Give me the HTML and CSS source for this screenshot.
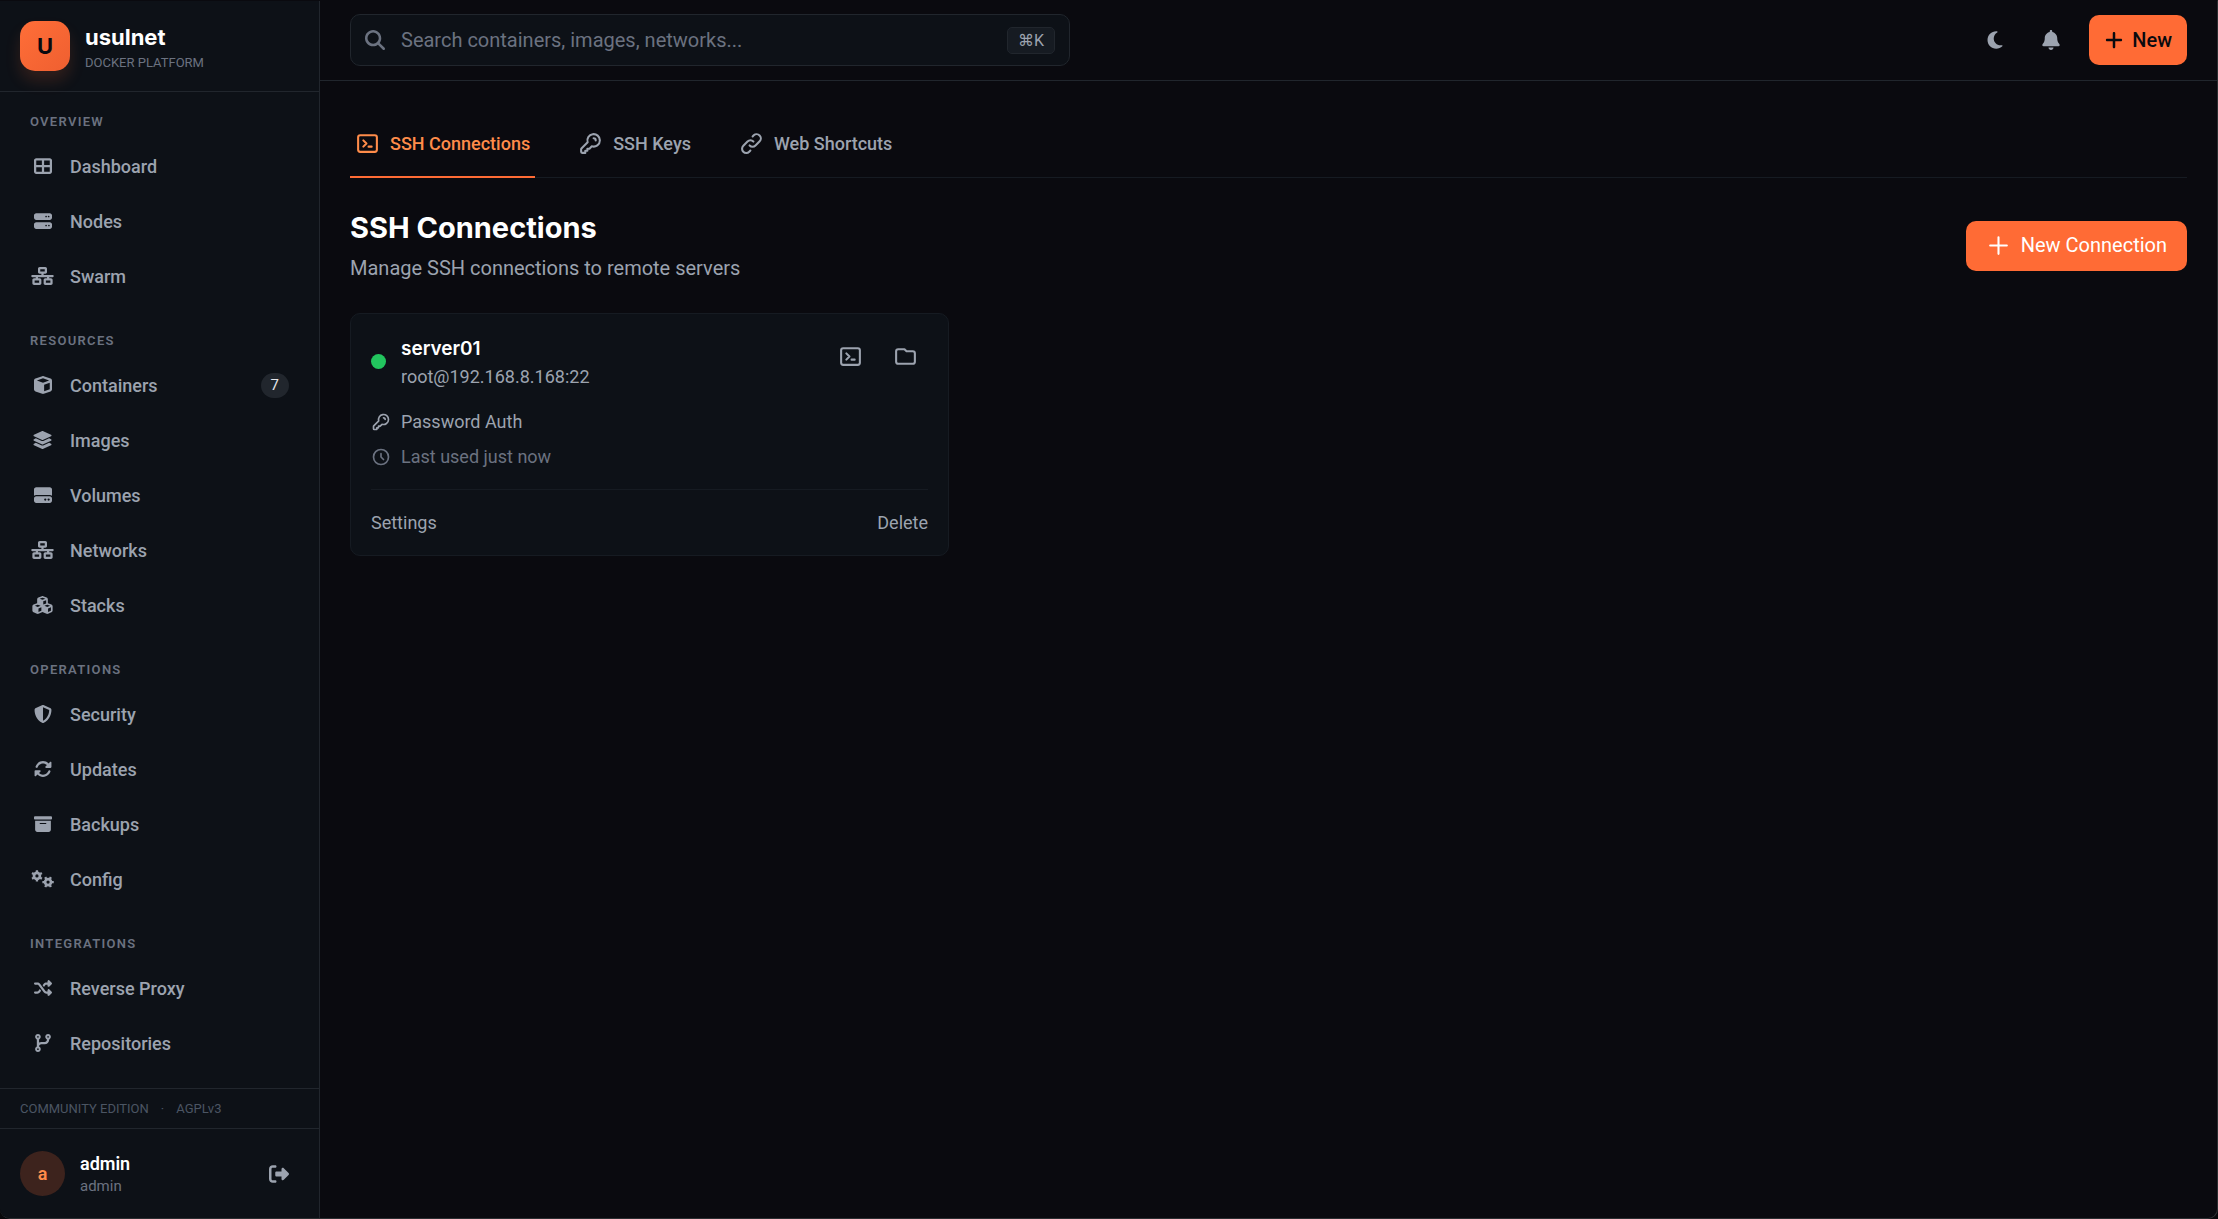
FILE: index.html
```
<!DOCTYPE html>
<html lang="en">
<head>
    <meta charset="UTF-8">
    <meta name="viewport" content="width=device-width, initial-scale=1.0">
    <title>SSH Connections - usulnet</title>
    <link rel="stylesheet" href="styles.css">
</head>
<body>
    <!-- Icon set -->
    <svg class="icon-set" aria-hidden="true">
        <symbol id="i-dashboard" viewBox="0 0 512 512"><path d="M448 96V224H288V96H448zm0 192V416H288V288H448zM224 224H64V96H224V224zM64 288H224V416H64V288zM64 32C28.7 32 0 60.7 0 96V416c0 35.3 28.7 64 64 64H448c35.3 0 64-28.7 64-64V96c0-35.3-28.7-64-64-64H64z"/></symbol>
        <symbol id="i-server" viewBox="0 0 512 512"><path d="M64 32C28.7 32 0 60.7 0 96v64c0 35.3 28.7 64 64 64H448c35.3 0 64-28.7 64-64V96c0-35.3-28.7-64-64-64H64zm280 72a24 24 0 1 1 0 48 24 24 0 1 1 0-48zm48 24a24 24 0 1 1 48 0 24 24 0 1 1 -48 0zM64 288c-35.3 0-64 28.7-64 64v64c0 35.3 28.7 64 64 64H448c35.3 0 64-28.7 64-64V352c0-35.3-28.7-64-64-64H64zm280 72a24 24 0 1 1 0 48 24 24 0 1 1 0-48zm56 24a24 24 0 1 1 48 0 24 24 0 1 1 -48 0z"/></symbol>
        <symbol id="i-network" viewBox="0 0 640 512"><path d="M256 64H384v64H256V64zM240 0c-26.5 0-48 21.5-48 48v96c0 26.5 21.5 48 48 48h48v32H32c-17.7 0-32 14.3-32 32s14.3 32 32 32h96v32H80c-26.5 0-48 21.5-48 48v96c0 26.5 21.5 48 48 48H240c26.5 0 48-21.5 48-48V368c0-26.5-21.5-48-48-48H192V288H448v32H400c-26.5 0-48 21.5-48 48v96c0 26.5 21.5 48 48 48H560c26.5 0 48-21.5 48-48V368c0-26.5-21.5-48-48-48H512V288h96c17.7 0 32-14.3 32-32s-14.3-32-32-32H352V192h48c26.5 0 48-21.5 48-48V48c0-26.5-21.5-48-48-48H240zM96 448V384H224v64H96zm320-64H544v64H416V384z"/></symbol>
        <symbol id="i-cube" viewBox="0 0 512 512"><path d="M234.5 5.7c13.9-5 29.1-5 43.1 0l192 68.6C495 83.4 512 107.5 512 134.6V377.4c0 27-17 51.2-42.5 60.3l-192 68.6c-13.9 5-29.1 5-43.1 0l-192-68.6C17 428.6 0 404.5 0 377.4V134.6c0-27 17-51.2 42.5-60.3l192-68.6zM256 66L82.3 128 256 190l173.7-62L256 66zm32 368.6l160-57.1v-188L288 246.6v188z"/></symbol>
        <symbol id="i-layers" viewBox="0 0 576 512"><path d="M264.5 5.2c14.9-6.9 32.1-6.9 47 0l218.6 101c8.5 3.9 13.9 12.4 13.9 21.8s-5.4 17.9-13.9 21.8l-218.6 101c-14.9 6.9-32.1 6.9-47 0L45.9 149.8C37.4 145.8 32 137.3 32 128s5.4-17.9 13.9-21.8L264.5 5.2zM476.9 209.6l53.2 24.6c8.5 3.9 13.9 12.4 13.9 21.8s-5.4 17.9-13.9 21.8l-218.6 101c-14.9 6.9-32.1 6.9-47 0L45.9 277.8C37.4 273.8 32 265.3 32 256s5.4-17.9 13.9-21.8l53.2-24.6 152 70.2c23.4 10.8 50.4 10.8 73.8 0l152-70.2zm-152 198.2l152-70.2 53.2 24.6c8.5 3.9 13.9 12.4 13.9 21.8s-5.4 17.9-13.9 21.8l-218.6 101c-14.9 6.9-32.1 6.9-47 0L45.9 405.8C37.4 401.8 32 393.3 32 384s5.4-17.9 13.9-21.8l53.2-24.6 152 70.2c23.4 10.8 50.4 10.8 73.8 0z"/></symbol>
        <symbol id="i-drive" viewBox="0 0 512 512"><path d="M0 96C0 60.7 28.7 32 64 32H448c35.3 0 64 28.7 64 64V280.4c-17-15.2-39.4-24.4-64-24.4H64c-24.6 0-47 9.2-64 24.4V96zM64 288H448c35.3 0 64 28.7 64 64v64c0 35.3-28.7 64-64 64H64c-35.3 0-64-28.7-64-64V352c0-35.3 28.7-64 64-64zM320 416a32 32 0 1 0 0-64 32 32 0 1 0 0 64zm128-32a32 32 0 1 0 -64 0 32 32 0 1 0 64 0z"/></symbol>
        <symbol id="i-cubes" viewBox="0 0 576 512"><path d="M290.8 48.6l78.4 29.7L288 109.5 206.8 78.3l78.4-29.7c1.8-.7 3.8-.7 5.7 0zM136 92.5V204.7c-1.3 .4-2.6 .8-3.9 1.3l-96 36.4C14.4 250.6 0 271.5 0 294.7V413.9c0 22.2 13.1 42.3 33.5 51.3l96 42.2c14.4 6.3 30.7 6.3 45.1 0L288 457.5l113.5 49.9c14.4 6.3 30.7 6.3 45.1 0l96-42.2c20.3-8.9 33.5-29.1 33.5-51.3V294.7c0-23.3-14.4-44.1-36.1-52.4l-96-36.4c-1.3-.5-2.6-.9-3.9-1.3V92.5c0-23.3-14.4-44.1-36.1-52.4l-96-36.4c-12.8-4.8-26.9-4.8-39.7 0l-96 36.4C150.4 48.4 136 69.3 136 92.5zM392 210.6l-82.4 31.2V152.6L392 121v89.6zM154.8 250.9l78.4 29.7L152 311.7 70.8 280.6l78.4-29.7c1.8-.7 3.8-.7 5.7 0zm18.8 204.4V354.8L256 323.2v95.9l-82.4 36.2zM421.2 250.9c1.8-.7 3.8-.7 5.7 0l78.4 29.7L424 311.7l-81.2-31.1 78.4-29.7zM523.2 421.2l-77.6 34.1V354.8L528 323.2v90.7c0 3.2-1.9 6-4.8 7.3z"/></symbol>
        <symbol id="i-shield" viewBox="0 0 512 512"><path d="M256 0c4.6 0 9.2 1 13.4 2.9L457.7 82.8c22 9.3 38.4 31 38.3 57.2c-.5 99.2-41.3 280.7-213.6 363.2c-16.7 8-36.1 8-52.8 0C57.3 420.7 16.5 239.2 16 140c-.1-26.2 16.3-47.9 38.3-57.2L242.7 2.9C246.8 1 251.4 0 256 0zm0 66.8V444.8C394 378 431.1 230.1 432 141.4L256 66.8z"/></symbol>
        <symbol id="i-sync" viewBox="0 0 512 512"><path d="M142.9 142.9c62.2-62.2 162.7-62.5 225.3-1L327 183c-6.9 6.9-8.9 17.2-5.2 26.2s12.5 14.8 22.2 14.8H472c13.3 0 24-10.7 24-24V72c0-9.7-5.8-18.5-14.8-22.2s-19.3-1.7-26.2 5.2L413.4 96.6c-87.6-86.5-228.7-86.2-315.8 1C73.2 122 55.6 150.7 44.8 181.4c-5.9 16.7 2.9 34.9 19.5 40.8s34.9-2.9 40.8-19.5c7.7-21.8 20.2-42.3 37.8-59.8zM16 312V440c0 9.7 5.8 18.5 14.8 22.2s19.3 1.7 26.2-5.2l41.6-41.6c87.6 86.5 228.7 86.2 315.8-1c24.4-24.4 42.1-53.1 52.9-83.7c5.9-16.7-2.9-34.9-19.5-40.8s-34.9 2.9-40.8 19.5c-7.7 21.8-20.2 42.3-37.8 59.8c-62.2 62.2-162.7 62.5-225.3 1L185 329c6.9-6.9 8.9-17.2 5.2-26.2s-12.5-14.8-22.2-14.8H40c-13.3 0-24 10.7-24 24z"/></symbol>
        <symbol id="i-archive" viewBox="0 0 512 512"><path d="M32 32H480c17.7 0 32 14.3 32 32V96c0 17.7-14.3 32-32 32H32C14.3 128 0 113.7 0 96V64C0 46.3 14.3 32 32 32zm0 128H480V416c0 35.3-28.7 64-64 64H96c-35.3 0-64-28.7-64-64V160zm128 80c0 8.8 7.2 16 16 16H336c8.8 0 16-7.2 16-16s-7.2-16-16-16H176c-8.8 0-16 7.2-16 16z"/></symbol>
        <symbol id="i-gears" viewBox="0 0 640 512">
            <g fill="none" stroke="currentColor">
                <circle cx="162" cy="168" r="84" stroke-width="76"/>
                <path stroke-width="66" d="M162 62V6M162 274v56M70 115L22 87M254 221l48 28M254 115l48-28M70 221l-48 28"/>
                <circle cx="478" cy="344" r="84" stroke-width="76"/>
                <path stroke-width="66" d="M372 344H316M584 344h56M425 252L397 204M531 436l28 48M531 252l28-48M425 436l-28 48"/>
            </g>
        </symbol>
        <symbol id="i-shuffle" viewBox="0 0 512 512"><path d="M403.8 34.4c12-5 25.7-2.2 34.9 6.9l64 64c6 6 9.4 14.1 9.4 22.6s-3.4 16.6-9.4 22.6l-64 64c-9.2 9.2-22.9 11.9-34.9 6.9s-19.8-16.6-19.8-29.6V160H352c-10.1 0-19.6 4.7-25.6 12.8L284 229.3 244 176l31.2-41.6C293.3 110.2 321.8 96 352 96h32V64c0-12.9 7.8-24.6 19.8-29.6zM164 282.7L204 336l-31.2 41.6C154.7 401.8 126.2 416 96 416H32c-17.7 0-32-14.3-32-32s14.3-32 32-32H96c10.1 0 19.6-4.7 25.6-12.8L164 282.7zm274.6 188c-9.2 9.2-22.9 11.9-34.9 6.9s-19.8-16.6-19.8-29.6V416H352c-30.2 0-58.7-14.2-76.8-38.4L121.6 172.8c-6-8.1-15.5-12.8-25.6-12.8H32c-17.7 0-32-14.3-32-32s14.3-32 32-32H96c30.2 0 58.7 14.2 76.8 38.4L326.4 339.2c6 8.1 15.5 12.8 25.6 12.8h32V320c0-12.9 7.8-24.6 19.8-29.6s25.7-2.2 34.9 6.9l64 64c6 6 9.4 14.1 9.4 22.6s-3.4 16.6-9.4 22.6l-64 64z"/></symbol>
        <symbol id="i-branch" viewBox="0 0 448 512"><path d="M80 104a24 24 0 1 0 0-48 24 24 0 1 0 0 48zm80-24c0 32.8-19.7 61-48 73.3v87.8c18.8-10.9 40.7-17.1 64-17.1h96c35.3 0 64-28.7 64-64v-6.7C307.7 141 288 112.8 288 80c0-44.2 35.8-80 80-80s80 35.8 80 80c0 32.8-19.7 61-48 73.3V160c0 70.7-57.3 128-128 128H176c-35.3 0-64 28.7-64 64v6.7c28.3 12.3 48 40.5 48 73.3c0 44.2-35.8 80-80 80s-80-35.8-80-80c0-32.8 19.7-61 48-73.3V352 153.3C19.7 141 0 112.8 0 80C0 35.8 35.8 0 80 0s80 35.8 80 80zm232 0a24 24 0 1 0 -48 0 24 24 0 1 0 48 0zM80 456a24 24 0 1 0 0-48 24 24 0 1 0 0 48z"/></symbol>
        <symbol id="i-logout" viewBox="0 0 512 512"><path d="M377.9 105.9L500.7 228.7c7.2 7.2 11.3 17.1 11.3 27.3s-4.1 20.1-11.3 27.3L377.9 406.1c-6.4 6.4-15 9.9-24 9.9c-18.7 0-33.9-15.2-33.9-33.9l0-62.1-128 0c-17.7 0-32-14.3-32-32l0-64c0-17.7 14.3-32 32-32l128 0 0-62.1c0-18.7 15.2-33.9 33.9-33.9c9 0 17.6 3.6 24 9.9zM160 96L96 96c-17.7 0-32 14.3-32 32l0 256c0 17.7 14.3 32 32 32l64 0c17.7 0 32 14.3 32 32s-14.3 32-32 32l-64 0c-53 0-96-43-96-96L0 128C0 75 43 32 96 32l64 0c17.7 0 32 14.3 32 32s-14.3 32-32 32z"/></symbol>
        <symbol id="i-search" viewBox="0 0 512 512"><path d="M416 208c0 45.9-14.9 88.3-40 122.7L502.6 457.4c12.5 12.5 12.5 32.8 0 45.3s-32.8 12.5-45.3 0L330.7 376c-34.4 25.2-76.8 40-122.7 40C93.1 416 0 322.9 0 208S93.1 0 208 0S416 93.1 416 208zM208 352a144 144 0 1 0 0-288 144 144 0 1 0 0 288z"/></symbol>
        <symbol id="i-moon" viewBox="0 0 384 512"><path d="M223.5 32C100 32 0 132.3 0 256S100 480 223.5 480c60.6 0 115.5-24.2 155.8-63.4c5-4.9 6.3-12.5 3.1-18.7s-10.1-9.7-17-8.5c-9.8 1.7-19.8 2.6-30.1 2.6c-96.9 0-175.5-78.8-175.5-176c0-65.8 36-123.1 89.3-153.3c6.1-3.5 9.2-10.5 7.7-17.3s-7.3-11.9-14.3-12.5c-6.3-.5-12.6-.8-19-.8z"/></symbol>
        <symbol id="i-bell" viewBox="0 0 448 512"><path d="M224 0c-17.7 0-32 14.3-32 32V51.2C119 66 64 130.6 64 208v18.8c0 47-17.3 92.4-48.5 127.6l-7.4 8.3c-8.4 9.4-10.4 22.9-5.3 34.4S19.4 416 32 416H416c12.6 0 24-7.4 29.2-18.9s3.1-25-5.3-34.4l-7.4-8.3C401.3 319.2 384 273.9 384 226.8V208c0-77.4-55-142-128-156.8V32c0-17.7-14.3-32-32-32zm45.3 493.3c12-12 18.7-28.3 18.7-45.3H224 160c0 17 6.7 33.3 18.7 45.3s28.3 18.7 45.3 18.7s33.3-6.7 45.3-18.7z"/></symbol>
        <symbol id="i-plus-bold" viewBox="0 0 448 512"><path d="M256 80c0-17.7-14.3-32-32-32s-32 14.3-32 32V224H48c-17.7 0-32 14.3-32 32s14.3 32 32 32H192V432c0 17.7 14.3 32 32 32s32-14.3 32-32V288H400c17.7 0 32-14.3 32-32s-14.3-32-32-32H256V80z"/></symbol>
        <symbol id="i-terminal" viewBox="0 0 24 24"><path d="M8 9l3 3-3 3m5 0h3M5 20h14a2 2 0 002-2V6a2 2 0 00-2-2H5a2 2 0 00-2 2v12a2 2 0 002 2z"/></symbol>
        <symbol id="i-key" viewBox="0 0 24 24"><path d="M15 7a2 2 0 012 2m4 0a6 6 0 01-7.743 5.743L11 17H9v2H7v2H4a1 1 0 01-1-1v-2.586a1 1 0 01.293-.707l5.964-5.964A6 6 0 1121 9z"/></symbol>
        <symbol id="i-link" viewBox="0 0 24 24"><path d="M13.828 10.172a4 4 0 00-5.656 0l-4 4a4 4 0 105.656 5.656l1.102-1.101m-.758-4.899a4 4 0 005.656 0l4-4a4 4 0 00-5.656-5.656l-1.1 1.1"/></symbol>
        <symbol id="i-folder" viewBox="0 0 24 24"><path d="M3 7v10a2 2 0 002 2h14a2 2 0 002-2V9a2 2 0 00-2-2h-6l-2-2H5a2 2 0 00-2 2z"/></symbol>
        <symbol id="i-clock" viewBox="0 0 24 24"><path d="M12 8v4l3 3m6-3a9 9 0 11-18 0 9 9 0 0118 0z"/></symbol>
        <symbol id="i-plus" viewBox="0 0 24 24"><path d="M12 4v16m8-8H4"/></symbol>
    </svg>

    <div class="app">
        <!-- Sidebar -->
        <aside class="sidebar">
            <a class="brand" href="#">
                <span class="brand-logo">U</span>
                <span class="brand-text">
                    <span class="brand-name">usulnet</span>
                    <span class="brand-sub">DOCKER PLATFORM</span>
                </span>
            </a>

            <nav class="nav">
                <section class="nav-section">
                    <h2 class="nav-title">OVERVIEW</h2>
                    <a class="nav-item" href="#"><span class="nav-icon"><svg class="fa"><use href="#i-dashboard"/></svg></span>Dashboard</a>
                    <a class="nav-item" href="#"><span class="nav-icon"><svg class="fa"><use href="#i-server"/></svg></span>Nodes</a>
                    <a class="nav-item" href="#"><span class="nav-icon"><svg class="fa fa-wide"><use href="#i-network"/></svg></span>Swarm</a>
                </section>
                <section class="nav-section">
                    <h2 class="nav-title">RESOURCES</h2>
                    <a class="nav-item" href="#"><span class="nav-icon"><svg class="fa"><use href="#i-cube"/></svg></span>Containers<span class="badge">7</span></a>
                    <a class="nav-item" href="#"><span class="nav-icon"><svg class="fa fa-wide"><use href="#i-layers"/></svg></span>Images</a>
                    <a class="nav-item" href="#"><span class="nav-icon"><svg class="fa"><use href="#i-drive"/></svg></span>Volumes</a>
                    <a class="nav-item" href="#"><span class="nav-icon"><svg class="fa fa-wide"><use href="#i-network"/></svg></span>Networks</a>
                    <a class="nav-item" href="#"><span class="nav-icon"><svg class="fa fa-wide"><use href="#i-cubes"/></svg></span>Stacks</a>
                </section>
                <section class="nav-section">
                    <h2 class="nav-title">OPERATIONS</h2>
                    <a class="nav-item" href="#"><span class="nav-icon"><svg class="fa"><use href="#i-shield"/></svg></span>Security</a>
                    <a class="nav-item" href="#"><span class="nav-icon"><svg class="fa"><use href="#i-sync"/></svg></span>Updates</a>
                    <a class="nav-item" href="#"><span class="nav-icon"><svg class="fa"><use href="#i-archive"/></svg></span>Backups</a>
                    <a class="nav-item" href="#"><span class="nav-icon"><svg class="fa fa-wide"><use href="#i-gears"/></svg></span>Config</a>
                </section>
                <section class="nav-section">
                    <h2 class="nav-title">INTEGRATIONS</h2>
                    <a class="nav-item" href="#"><span class="nav-icon"><svg class="fa"><use href="#i-shuffle"/></svg></span>Reverse Proxy</a>
                    <a class="nav-item" href="#"><span class="nav-icon"><svg class="fa"><use href="#i-branch"/></svg></span>Repositories</a>
                </section>
            </nav>

            <div class="edition">
                <span>COMMUNITY EDITION</span>
                <span>·</span>
                <span>AGPLv3</span>
            </div>

            <div class="user">
                <span class="avatar">a</span>
                <span class="user-text">
                    <span class="user-name">admin</span>
                    <span class="user-role">admin</span>
                </span>
                <button class="logout" type="button" aria-label="Log out"><svg class="fa fa-lg"><use href="#i-logout"/></svg></button>
            </div>
        </aside>

        <div class="main">
            <!-- Top bar -->
            <header class="topbar">
                <label class="search">
                    <svg class="fa fa-lg"><use href="#i-search"/></svg>
                    <input class="search-input" type="text" placeholder="Search containers, images, networks..." aria-label="Search">
                    <kbd class="kbd">⌘K</kbd>
                </label>
                <div class="topbar-actions">
                    <button class="icon-btn" type="button" aria-label="Toggle theme"><svg class="fa fa-lg"><use href="#i-moon"/></svg></button>
                    <button class="icon-btn" type="button" aria-label="Notifications"><svg class="fa fa-lg"><use href="#i-bell"/></svg></button>
                    <button class="btn btn-new" type="button"><svg class="fa fa-lg"><use href="#i-plus-bold"/></svg>New</button>
                </div>
            </header>

            <main class="content">
                <nav class="tabs">
                    <a class="tab active" href="#"><svg class="line"><use href="#i-terminal"/></svg>SSH Connections</a>
                    <a class="tab" href="#"><svg class="line"><use href="#i-key"/></svg>SSH Keys</a>
                    <a class="tab" href="#"><svg class="line"><use href="#i-link"/></svg>Web Shortcuts</a>
                </nav>

                <div class="page-head">
                    <div>
                        <h1 class="page-title">SSH Connections</h1>
                        <p class="page-sub">Manage SSH connections to remote servers</p>
                    </div>
                    <button class="btn btn-connection" type="button"><svg class="line"><use href="#i-plus"/></svg>New Connection</button>
                </div>

                <div class="cards">
                    <article class="card">
                        <div class="card-head">
                            <span class="status"></span>
                            <div class="card-title">
                                <h3 class="card-name">server01</h3>
                                <p class="card-host">root@192.168.8.168:22</p>
                            </div>
                            <div class="card-tools">
                                <button class="tool" type="button" aria-label="Open terminal"><svg class="line"><use href="#i-terminal"/></svg></button>
                                <button class="tool" type="button" aria-label="Browse files"><svg class="line"><use href="#i-folder"/></svg></button>
                            </div>
                        </div>
                        <div class="card-info">
                            <p class="info"><svg class="line line-sm"><use href="#i-key"/></svg>Password Auth</p>
                            <p class="info info-dim"><svg class="line line-sm"><use href="#i-clock"/></svg>Last used just now</p>
                        </div>
                        <div class="card-foot">
                            <a class="card-link" href="#">Settings</a>
                            <button class="card-link" type="button">Delete</button>
                        </div>
                    </article>
                </div>
            </main>
        </div>
    </div>
</body>
</html>
```
FILE: styles.css
```
:root {
    --bg: #0a0a0f;
    --panel: #0d1117;
    --border: #21262d;
    --border-soft: #161b22;
    --text: #ffffff;
    --muted: #9ca3af;
    --dim: #6b7280;
    --faint: #4b5563;
    --accent: #ff6b35;
    --accent-light: #ff8c4a;
}

* {
    box-sizing: border-box;
}

body {
    margin: 0;
    background: #08080b;
    color: var(--text);
    font-family: Roboto, "Liberation Sans", sans-serif;
    font-size: 18px;
    line-height: 25px;
}

h1, h2, h3, p {
    margin: 0;
}

a {
    color: inherit;
    text-decoration: none;
}

button {
    padding: 0;
    border: none;
    background: none;
    color: inherit;
    font: inherit;
    cursor: pointer;
}

/* Icons */
.icon-set {
    display: none;
}

.fa {
    display: block;
    width: 18px;
    height: 18px;
    fill: currentColor;
    flex-shrink: 0;
}

.fa-wide {
    width: 23px;
}

.fa-lg {
    width: 20px;
    height: 20px;
}

.line {
    display: block;
    width: 25px;
    height: 25px;
    fill: none;
    stroke: currentColor;
    stroke-width: 2;
    stroke-linecap: round;
    stroke-linejoin: round;
    flex-shrink: 0;
}

.line-sm {
    width: 20px;
    height: 20px;
}

/* Window */
.app {
    display: flex;
    height: 100vh;
    overflow: hidden;
    background: var(--bg);
    border: solid #2b2e31;
    border-width: 1px 1px 1px 0;
    border-top-color: var(--bg);
    border-radius: 0 0 10px 10px;
}

/* Sidebar */
.sidebar {
    display: flex;
    flex-direction: column;
    flex-shrink: 0;
    width: 320px;
    background: var(--panel);
    border-right: 1px solid var(--border);
}

.brand {
    display: flex;
    align-items: center;
    gap: 15px;
    padding: 20px;
    border-bottom: 1px solid var(--border);
}

.brand-logo {
    display: flex;
    align-items: center;
    justify-content: center;
    width: 50px;
    height: 50px;
    border-radius: 15px;
    background: linear-gradient(135deg, #ff6e38, #ef5f30);
    box-shadow: 0 10px 15px rgba(255, 107, 53, 0.15);
    color: var(--bg);
    font: 700 22px/30px Inter, "Liberation Sans", sans-serif;
}

.brand-text,
.user-text {
    display: flex;
    flex-direction: column;
}

.brand-text {
    gap: 3px;
    padding-top: 3px;
}

.brand-name {
    font: 700 22px/27px Inter, "Liberation Sans", sans-serif;
}

.brand-sub {
    color: var(--dim);
    font-size: 13px;
    line-height: 17px;
}

.nav {
    flex: 1;
    min-height: 0;
    padding: 20px 15px;
    overflow: hidden;
}

.nav-section {
    display: flex;
    flex-direction: column;
    gap: 5px;
    margin-bottom: 30px;
}

.nav-title {
    margin-bottom: 4px;
    padding: 0 15px;
    color: var(--dim);
    font-size: 13px;
    font-weight: 600;
    line-height: 20px;
    letter-spacing: 0.1em;
}

.nav-item {
    display: flex;
    align-items: center;
    gap: 15px;
    height: 50px;
    padding: 0 15px;
    border-radius: 10px;
    color: var(--muted);
    font-weight: 500;
}

.nav-item:hover {
    background: var(--border-soft);
}

.nav-icon {
    display: flex;
    justify-content: center;
    width: 25px;
}

.badge {
    margin-left: auto;
    padding: 0 10px;
    border-radius: 13px;
    background: var(--border);
    color: #e5e7eb;
    font-size: 15px;
    font-weight: 400;
    line-height: 25px;
}

.edition {
    display: flex;
    gap: 12px;
    padding: 10px 20px;
    border-top: 1px solid var(--border);
    color: var(--faint);
    font-size: 13px;
    line-height: 19px;
}

.user {
    display: flex;
    align-items: center;
    gap: 15px;
    padding: 22px 20px;
    border-top: 1px solid var(--border);
}

.avatar {
    display: flex;
    align-items: center;
    justify-content: center;
    width: 45px;
    height: 45px;
    border-radius: 50%;
    background: #3d231d;
    color: var(--accent-light);
    font-weight: 600;
}

.user-name {
    font-weight: 600;
}

.user-role {
    color: var(--dim);
    font-size: 15px;
    line-height: 20px;
}

.logout {
    margin-left: auto;
    padding: 10px;
    color: var(--muted);
}

/* Main column */
.main {
    flex: 1;
    min-width: 0;
}

.topbar {
    display: flex;
    align-items: center;
    justify-content: space-between;
    height: 80px;
    padding: 0 30px 1px;
    border-bottom: 1px solid var(--border);
}

.search {
    display: flex;
    align-items: center;
    flex: 1;
    gap: 16px;
    max-width: 720px;
    height: 52px;
    padding: 0 14px;
    border: 1px solid var(--border);
    border-radius: 10px;
    background: var(--panel);
    color: var(--dim);
}

.search-input {
    flex: 1;
    min-width: 0;
    padding: 0;
    border: none;
    outline: none;
    background: none;
    color: var(--text);
    font: inherit;
    font-size: 20px;
}

.search-input::placeholder {
    color: var(--dim);
    opacity: 1;
}

.kbd {
    padding: 0 10px;
    border: 1px solid var(--border);
    border-radius: 5px;
    background: var(--border-soft);
    color: var(--muted);
    font: 16px/25px Roboto, "DejaVu Sans", sans-serif;
}

.topbar-actions {
    display: flex;
    align-items: center;
    gap: 10px;
}

.icon-btn {
    padding: 13px;
    color: var(--muted);
}

.btn {
    display: flex;
    align-items: center;
    gap: 10px;
    height: 50px;
    border-radius: 10px;
    background: var(--accent);
    font-size: 20px;
}

.btn-new {
    gap: 8px;
    margin-left: 5px;
    padding: 0 15px;
    color: var(--bg);
    font-weight: 500;
}

.btn-connection {
    padding: 0 20px;
    color: var(--text);
}

.content {
    padding: 30px;
}

/* Tabs */
.tabs {
    display: flex;
    gap: 38px;
    margin-bottom: 30px;
    box-shadow: inset 0 -1px var(--border-soft);
}

.tab {
    display: flex;
    align-items: center;
    gap: 10px;
    padding: 20px 5px;
    border-bottom: 2px solid transparent;
    color: var(--muted);
    font-weight: 500;
}

.tab.active {
    border-color: var(--accent);
    color: var(--accent-light);
}

.page-head {
    display: flex;
    align-items: center;
    justify-content: space-between;
    margin-bottom: 30px;
}

.page-title {
    margin-bottom: 5px;
    font: 700 29px/40px Inter, "Liberation Sans", sans-serif;
}

.page-sub {
    color: var(--muted);
    font-size: 20px;
    line-height: 30px;
}

/* Connection cards */
.cards {
    display: grid;
    grid-template-columns: repeat(3, 1fr);
    gap: 20px;
}

.card {
    padding: 20px;
    border: 1px solid var(--border-soft);
    border-radius: 10px;
    background: var(--panel);
}

.card-head {
    display: flex;
    align-items: center;
    gap: 15px;
    margin-bottom: 20px;
}

.status {
    width: 15px;
    height: 15px;
    border-radius: 50%;
    background: #22c55e;
}

.card-name {
    font: 600 19px/30px Inter, "Liberation Sans", sans-serif;
}

.card-host {
    color: var(--muted);
}

.card-tools {
    display: flex;
    align-self: flex-start;
    gap: 10px;
    margin-left: auto;
}

.tool {
    padding: 10px;
    color: var(--muted);
}

.card-info {
    display: flex;
    flex-direction: column;
    gap: 10px;
    margin-bottom: 20px;
}

.info {
    display: flex;
    align-items: center;
    gap: 10px;
    color: var(--muted);
}

.info-dim {
    color: var(--dim);
}

.card-foot {
    display: flex;
    justify-content: space-between;
    padding-top: 20px;
    border-top: 1px solid var(--border-soft);
}

.card-link {
    color: var(--muted);
}
```
